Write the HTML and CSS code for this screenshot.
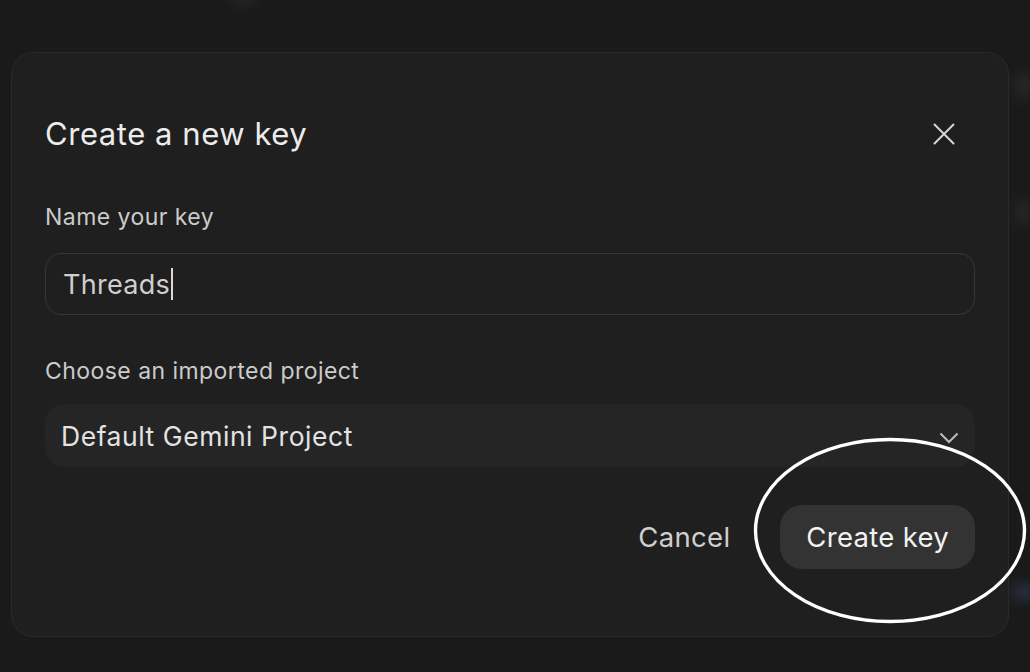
FILE: index.html
```html
<!DOCTYPE html>
<html lang="en">
<head>
<meta charset="utf-8">
<title>Create a new key</title>
<link rel="stylesheet" href="styles.css">
</head>
<body>
<div class="backdrop">
  <span class="blur blur-a"></span>
  <span class="blur blur-b"></span>
  <span class="blur blur-c"></span>
  <span class="blur blur-d"></span>
</div>
<div class="stage">
  <section class="dialog">
    <header class="dialog-head">
      <h1 class="title">Create a new key</h1>
      <button class="close" aria-label="Close">
        <svg width="22" height="22" viewBox="0 0 22 22"><path d="M1.5 1.5 L20.5 20.5 M20.5 1.5 L1.5 20.5" stroke="#d6d6d6" stroke-width="2" fill="none" stroke-linecap="round"/></svg>
      </button>
    </header>
    <label class="label label-name">Name your key</label>
    <div class="input"><span class="input-text">Threads</span><span class="caret"></span></div>
    <label class="label label-project">Choose an imported project</label>
    <div class="select">
      <span class="select-text">Default Gemini Project</span>
      <svg class="chev" width="20" height="12" viewBox="0 0 20 12"><path d="M1.5 1.5 L10 10 L18.5 1.5" stroke="#bdbdbd" stroke-width="2" fill="none"/></svg>
    </div>
    <footer class="actions">
      <button class="btn-cancel">Cancel</button>
      <button class="btn-create">Create key</button>
    </footer>
  </section>
</div>
<svg class="annot" width="274" height="187" viewBox="0 0 274 187"><ellipse cx="137" cy="93.5" rx="134.5" ry="91" fill="none" stroke="#ffffff" stroke-width="3.4"/></svg>
</body>
</html>
```
FILE: styles.css
```css
* { box-sizing: border-box; }
html, body { margin: 0; padding: 0; }
body {
  width: 1030px;
  height: 672px;
  overflow: hidden;
  background: #1a1a1a;
  font-family: Inter, "Noto Sans", "Liberation Sans", sans-serif;
  position: relative;
}
.backdrop { position: absolute; inset: 0; }
.blur { position: absolute; border-radius: 50%; filter: blur(7px); }
.blur-a { left: 1016px; top: 74px; width: 14px; height: 24px; background: #2e2e2e; }
.blur-b { left: 1016px; top: 200px; width: 14px; height: 24px; background: #2b2b2b; }
.blur-c { left: 1010px; top: 586px; width: 30px; height: 12px; background: #2f3850; }
.blur-d { left: 228px; top: -10px; width: 30px; height: 14px; background: #282828; }

.stage {
  position: relative;
  padding: 52px 21px 0 11px;
}
.dialog {
  height: 585px;
  background: #1f1f1f;
  border: 1px solid #2a2a2a;
  border-radius: 22px;
  padding: 63px 33px 0 33px;
  display: flex;
  flex-direction: column;
}
.dialog-head {
  display: flex;
  align-items: center;
  justify-content: space-between;
  height: 36px;
}
.title {
  margin: 0;
  font-size: 31px;
  line-height: 36px;
  font-weight: 400;
  color: #ececec;
  letter-spacing: 0.55px;
}
.close {
  background: none;
  border: 0;
  padding: 0;
  margin-right: 20px;
  width: 22px;
  height: 22px;
  display: flex;
}
.label {
  display: block;
  font-size: 23px;
  line-height: 30px;
  color: #cbcbcb;
  letter-spacing: 0.45px;
}
.label-name { margin-top: 50px; }
.label-project { margin-top: 41px; }
.input {
  margin-top: 21px;
  height: 62px;
  border: 1.5px solid #383838;
  border-radius: 16px;
  padding-left: 17px;
  display: flex;
  align-items: center;
}
.input-text {
  font-size: 27px;
  color: #cfcfcf;
  letter-spacing: 0.3px;
}
.caret {
  width: 1.5px;
  height: 32px;
  background: #d8d8d8;
  margin-left: 1px;
}
.select {
  margin-top: 18px;
  height: 63px;
  background: #252525;
  border-radius: 20px;
  padding: 0 16px 0 16px;
  display: flex;
  align-items: center;
  justify-content: space-between;
}
.select-text {
  font-size: 26.5px;
  color: #e3e3e3;
  letter-spacing: 0.55px;
}
.chev { margin-top: 4px; }
.actions {
  margin-top: 38px;
  display: flex;
  justify-content: flex-end;
  align-items: center;
  gap: 50px;
}
.btn-cancel {
  background: none;
  border: 0;
  padding: 0;
  font-family: inherit;
  font-size: 27.5px;
  color: #cfcfcf;
  letter-spacing: 0.3px;
}
.btn-create {
  height: 64px;
  padding: 0 26px;
  border: 0;
  border-radius: 22px;
  background: #333333;
  font-family: inherit;
  font-size: 27.5px;
  color: #f2f2f2;
  letter-spacing: 0.3px;
}
.annot {
  position: absolute;
  left: 753px;
  top: 437px;
}
```
